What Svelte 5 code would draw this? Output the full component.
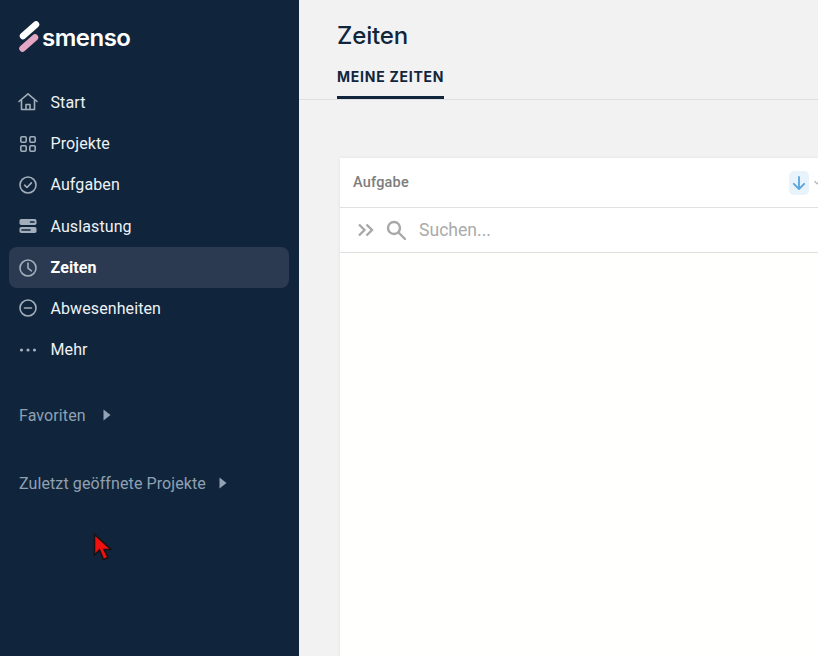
<script>
  const navItems = [
    { label: 'Start', icon: 'home' },
    { label: 'Projekte', icon: 'grid' },
    { label: 'Aufgaben', icon: 'check' },
    { label: 'Auslastung', icon: 'server' },
    { label: 'Zeiten', icon: 'clock', active: true },
    { label: 'Abwesenheiten', icon: 'minus' },
    { label: 'Mehr', icon: 'dots' }
  ];
</script>

<div class="page">
  <aside class="sidebar">
    <div class="brand">
      <svg class="logo-mark" width="22" height="34" viewBox="0 0 22 34">
        <line x1="4" y1="16" x2="17" y2="4.500" stroke="#fff" stroke-width="6.500" stroke-linecap="round" />
        <line x1="3.500" y1="28.500" x2="16" y2="17.500" stroke="#e3a6c4" stroke-width="6.500" stroke-linecap="round" />
      </svg>
      <span class="wordmark">smenso</span>
    </div>

    <nav class="nav">
      {#each navItems as item}
        <div class="nav-item" class:active={item.active}>
          <svg class="nav-icon" width="20" height="20" viewBox="0 0 20 20" fill="none" stroke="currentColor" stroke-width="1.600" stroke-linecap="round" stroke-linejoin="round">
            {#if item.icon === 'home'}
              <path d="M1 9.500 10 1.800l9 7.700" />
              <path d="M3.500 8v9.500h13V8" />
              <path d="M8 17.500v-5h4v5" />
            {:else if item.icon === 'grid'}
              <rect x="2.800" y="2.800" width="5.400" height="5.400" rx="1.200" />
              <rect x="11.800" y="2.800" width="5.400" height="5.400" rx="1.200" />
              <rect x="2.800" y="11.800" width="5.400" height="5.400" rx="1.200" />
              <rect x="11.800" y="11.800" width="5.400" height="5.400" rx="1.200" />
            {:else if item.icon === 'check'}
              <circle cx="10" cy="10" r="8" />
              <path d="M6.600 10.200 9 12.500l4.400-4.600" />
            {:else if item.icon === 'server'}
              <rect x="1.500" y="3" width="17" height="6" rx="1.800" fill="currentColor" stroke="none" />
              <rect x="1.500" y="11" width="17" height="6" rx="1.800" fill="currentColor" stroke="none" />
              <path d="M12.500 6h3.500M4 14h8" stroke="#10253b" />
            {:else if item.icon === 'clock'}
              <circle cx="10" cy="10" r="8" />
              <path d="M10 5v5.200l3.400 2.600" />
            {:else if item.icon === 'minus'}
              <circle cx="10" cy="10" r="8" />
              <path d="M6.500 10h7" />
            {:else}
              <circle cx="3.500" cy="10" r="1.600" fill="currentColor" stroke="none" />
              <circle cx="10" cy="10" r="1.600" fill="currentColor" stroke="none" />
              <circle cx="16.500" cy="10" r="1.600" fill="currentColor" stroke="none" />
            {/if}
          </svg>
          <span>{item.label}</span>
        </div>
      {/each}
    </nav>

    <div class="section first">
      <span>Favoriten</span>
      <svg width="8" height="12" viewBox="0 0 8 12"><path d="M0.500 0.500 7.500 6l-7 5.500z" fill="#93a3b5" /></svg>
    </div>
    <div class="section second">
      <span>Zuletzt geöffnete Projekte</span>
      <svg width="8" height="12" viewBox="0 0 8 12"><path d="M0.500 0.500 7.500 6l-7 5.500z" fill="#93a3b5" /></svg>
    </div>
  </aside>

  <main class="main">
    <header class="header">
      <h1>Zeiten</h1>
      <div class="tab">MEINE ZEITEN</div>
    </header>

    <section class="card">
      <div class="card-head">
        <span>Aufgabe</span>
        <div class="sort-wrap">
          <div class="sort">
            <svg width="14" height="14" viewBox="0 0 14 14" fill="none" stroke="#5aa5dc" stroke-width="1.800" stroke-linecap="round" stroke-linejoin="round">
              <path d="M7 1v12M1.800 7.800 7 13l5.200-5.200" />
            </svg>
          </div>
          <svg width="6" height="5" viewBox="0 0 6 5" fill="none" stroke="#b5b5b5" stroke-width="1.200">
            <path d="M0.500 1 3 3.800 5.500 1" />
          </svg>
        </div>
      </div>
      <div class="search">
        <svg width="18" height="14" viewBox="0 0 18 14" fill="none" stroke="#a8a8a8" stroke-width="2.400">
          <path d="M2 1.500 7.500 7 2 12.500M9.500 1.500 15 7l-5.500 5.500" />
        </svg>
        <svg width="20" height="20" viewBox="0 0 20 20" fill="none" stroke="#a8a8a8" stroke-width="2.400" stroke-linecap="round">
          <circle cx="8" cy="8" r="6" />
          <path d="M12.500 12.500 19 19" />
        </svg>
        <span>Suchen...</span>
      </div>
    </section>
  </main>

  <svg class="cursor" width="20" height="28" viewBox="0 0 20 28">
    <path d="M1.500 1.500V22L6.500 17 10.500 26.500l4.500-2-4-8h7z" fill="#f01010" stroke="#1a1212" stroke-width="1.600" />
  </svg>
</div>

<style>
  :global(body) {
    margin: 0;
    background: #f2f2f3;
  }
  .page {
    position: relative;
    display: flex;
    width: 818px;
    height: 656px;
    overflow: hidden;
    font-family: Roboto, sans-serif;
  }
  .sidebar {
    flex: 0 0 299px;
    background: #10253b;
    box-sizing: border-box;
    padding: 20px 10px 0 9px;
  }
  .brand {
    display: flex;
    align-items: center;
    gap: 1px;
    padding-left: 10px;
    height: 34px;
  }
  .wordmark {
    font-family: Inter, sans-serif;
    font-size: 24px;
    font-weight: 600;
    letter-spacing: -0.5px;
    color: #fff;
  }
  .nav {
    margin-top: 28.400px;
    display: flex;
    flex-direction: column;
    gap: 1px;
  }
  .nav-item {
    display: flex;
    align-items: center;
    gap: 12.500px;
    height: 40.200px;
    padding-left: 9px;
    border-radius: 8px;
    color: #eef2f6;
    font-size: 16px;
    letter-spacing: 0.1px;
  }
  .nav-item.active {
    margin-top: 0.300px;
    margin-bottom: -0.300px;
    background: #2b3a50;
    font-weight: 700;
    color: #fff;
  }
  .nav-icon {
    color: #a2aebb;
    flex: none;
  }
  .section {
    display: flex;
    align-items: center;
    gap: 17px;
    padding-left: 10px;
    font-size: 16px;
    letter-spacing: 0.1px;
    color: #8fa0b3;
  }
  .section.first {
    margin-top: 36px;
  }
  .section.second {
    margin-top: 49px;
    gap: 13px;
  }
  .main {
    flex: 1;
    min-width: 0;
  }
  .header {
    height: 100px;
    box-sizing: border-box;
    border-bottom: 1px solid #dedfe0;
    padding: 21px 0 0 38px;
  }
  h1 {
    margin: 0;
    font-family: Inter, sans-serif;
    font-size: 24px;
    line-height: 30px;
    font-weight: 500;
    letter-spacing: -0.150px;
    color: #11263d;
  }
  .tab {
    display: inline-block;
    margin-top: 17px;
    height: 31px;
    box-sizing: border-box;
    line-height: 18px;
    border-bottom: 3px solid #11263d;
    font-family: Inter, sans-serif;
    font-size: 14px;
    font-weight: 700;
    letter-spacing: 0.750px;
    color: #11263d;
  }
  .card {
    margin: 58px 0 0 41px;
    height: 500px;
    background: #fffffd;
    box-shadow: 0 0 3px rgba(0, 0, 0, 0.08);
  }
  .card-head {
    display: flex;
    align-items: center;
    justify-content: space-between;
    height: 49px;
    padding: 0 0 0 13px;
    background: #fff;
    border-bottom: 1px solid #e1e1e1;
    font-size: 14.500px;
    font-weight: 500;
    letter-spacing: 0.200px;
    color: #7d7d7d;
  }
  .sort-wrap {
    display: flex;
    align-items: center;
    gap: 5px;
    margin-right: -2px;
  }
  .sort {
    display: flex;
    align-items: center;
    justify-content: center;
    width: 20px;
    height: 24px;
    background: #e9f3fb;
    border-radius: 5px;
  }
  .search {
    display: flex;
    align-items: center;
    height: 44px;
    padding-left: 17px;
    gap: 11px;
    background: #fff;
    border-bottom: 1px solid #e1e1e1;
    font-size: 17.600px;
    color: #aaaaaa;
  }
  .search span {
    margin-left: 2px;
  }
  .cursor {
    position: absolute;
    left: 93px;
    top: 533px;
  }
</style>
